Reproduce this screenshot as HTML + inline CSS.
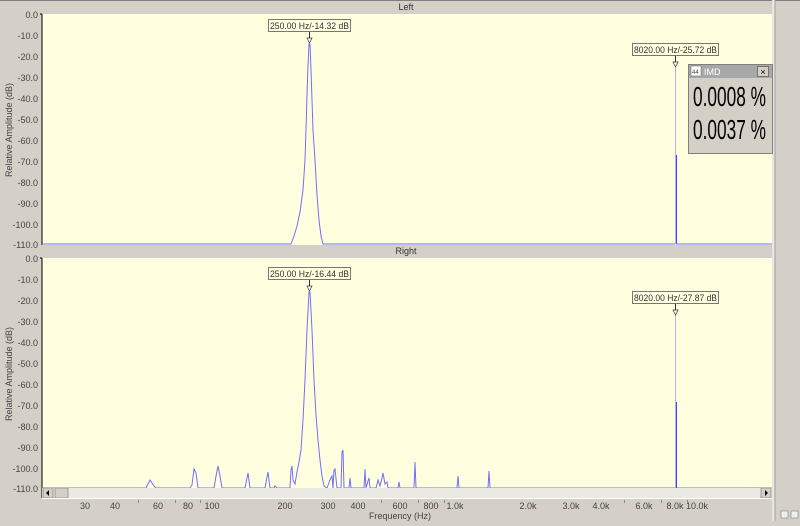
<!DOCTYPE html>
<html><head><meta charset="utf-8"><style>
body{margin:0;width:800px;height:521px;overflow:hidden;background:#d4d0c8;font-family:"Liberation Sans",sans-serif;}
</style></head><body>
<svg width="800" height="521" xmlns="http://www.w3.org/2000/svg" font-family="Liberation Sans, sans-serif">
<rect x="0" y="0" width="800" height="521" fill="#d4d0c8"/>
<rect x="0" y="0" width="800" height="1" fill="#808080"/>
<rect x="772" y="0" width="3" height="521" fill="#e8e6e0"/>
<line x1="775" y1="0" x2="775" y2="521" stroke="#a0a0a0"/>
<text x="406" y="10" font-size="9" fill="#333" text-anchor="middle">Left</text>
<text x="406" y="254" font-size="9" fill="#333" text-anchor="middle">Right</text>
<rect x="42" y="14" width="730" height="231" fill="#ffffe0"/>
<rect x="42" y="258" width="730" height="230" fill="#ffffe0"/>
<line x1="42" y1="14" x2="42" y2="245" stroke="#000"/>
<line x1="42" y1="258" x2="42" y2="498" stroke="#000"/>
<line x1="40" y1="14" x2="42" y2="14" stroke="#000"/>
<line x1="40" y1="258" x2="42" y2="258" stroke="#000"/>
<g font-size="9" fill="#444" text-anchor="end">
<text x="38" y="18">0.0</text><text x="38" y="39">-10.0</text><text x="38" y="60">-20.0</text><text x="38" y="81">-30.0</text><text x="38" y="102">-40.0</text><text x="38" y="123">-50.0</text><text x="38" y="144">-60.0</text><text x="38" y="165">-70.0</text><text x="38" y="186">-80.0</text><text x="38" y="207">-90.0</text><text x="38" y="228">-100.0</text><text x="38" y="248">-110.0</text>
<text x="38" y="262">0.0</text><text x="38" y="283">-10.0</text><text x="38" y="304">-20.0</text><text x="38" y="325">-30.0</text><text x="38" y="346">-40.0</text><text x="38" y="367">-50.0</text><text x="38" y="388">-60.0</text><text x="38" y="409">-70.0</text><text x="38" y="430">-80.0</text><text x="38" y="451">-90.0</text><text x="38" y="472">-100.0</text><text x="38" y="492">-110.0</text>
</g>
<text transform="translate(12,130) rotate(-90)" font-size="9" fill="#444" text-anchor="middle">Relative Amplitude (dB)</text>
<text transform="translate(12,374) rotate(-90)" font-size="9" fill="#444" text-anchor="middle">Relative Amplitude (dB)</text>
<polyline fill="none" stroke="#6f6fff" stroke-width="1" points="42,244 291,244 294,236 297,226 300,212 303,190 305,160 306,130 307,95 308,65 309,44 310,44 311,70 312,100 313,130 315,160 317,195 319,220 321,236 323,244 674,244 675,244"/>
<line x1="675.5" y1="68" x2="675.5" y2="244" stroke="#b0b0ff"/>
<line x1="676.5" y1="155" x2="676.5" y2="244" stroke="#4040ff"/>
<line x1="676" y1="244" x2="772" y2="244" stroke="#6f6fff"/>
<polyline fill="none" stroke="#6f6fff" stroke-width="1" points="42,488 146,488 150,480 154,486 156,488 190,488 192,485 194,469 196,473 198,488 214,488 216,476 218,466 220,476 222,488 245,488 247,478 248,473 250,488 265,488 267,477 268,472 270,488 274,488 275,486 277,488 290,488 291,470 292,466 293,480 295,484 297,472 299,462 301,450 303,420 305,380 307,330 309,292 310,292 312,330 314,380 316,415 318,440 320,460 322,476 324,486 327,488 330,480 332,476 333,488 334,470 335,469 337,488 341,488 342,452 343,450 344,488 349,488 350,478 351,488 364,488 365,469 366,488 368,481 369,478 370,488 376,488 378,480 380,486 382,478 383,473 385,484 387,482 388,488 398,488 399,482 400,488 414,488 415,462 416,488 457,488 458,476 459,488 488,488 489,471 490,488 772,488"/>
<line x1="675.5" y1="315" x2="675.5" y2="488" stroke="#b0b0ff"/>
<line x1="676.5" y1="402" x2="676.5" y2="488" stroke="#4040ff"/>
<g font-size="9" fill="#333">
<rect x="268.5" y="19.5" width="82" height="12" fill="#ffffe0" stroke="#777"/>
<text x="270" y="29" textLength="79" lengthAdjust="spacingAndGlyphs">250.00 Hz/-14.32 dB</text>
<line x1="309.5" y1="32" x2="309.5" y2="38" stroke="#333"/>
<polygon points="307,38 312,38 309.5,43" fill="#fff" stroke="#333" stroke-width="0.7"/>
<rect x="632.5" y="43.5" width="86" height="12" fill="#ffffe0" stroke="#777"/>
<text x="634" y="53" textLength="83" lengthAdjust="spacingAndGlyphs">8020.00 Hz/-25.72 dB</text>
<line x1="675.5" y1="56" x2="675.5" y2="62" stroke="#333"/>
<polygon points="673,62 678,62 675.5,67" fill="#fff" stroke="#333" stroke-width="0.7"/>
<rect x="268.5" y="267.5" width="82" height="12" fill="#ffffe0" stroke="#777"/>
<text x="270" y="277" textLength="79" lengthAdjust="spacingAndGlyphs">250.00 Hz/-16.44 dB</text>
<line x1="309.5" y1="280" x2="309.5" y2="286" stroke="#333"/>
<polygon points="307,286 312,286 309.5,291" fill="#fff" stroke="#333" stroke-width="0.7"/>
<rect x="632.5" y="291.5" width="86" height="12" fill="#ffffe0" stroke="#777"/>
<text x="634" y="301" textLength="83" lengthAdjust="spacingAndGlyphs">8020.00 Hz/-27.87 dB</text>
<line x1="675.5" y1="304" x2="675.5" y2="310" stroke="#333"/>
<polygon points="673,310 678,310 675.5,315" fill="#fff" stroke="#333" stroke-width="0.7"/>
</g>
<rect x="42" y="488" width="730" height="10" fill="#ebe9e4"/>
<rect x="43" y="488" width="10" height="10" fill="#d4d0c8" stroke="#808080" stroke-width="0.7"/>
<polygon points="49,490 46,493 49,496" fill="#000"/>
<rect x="55" y="488" width="13" height="10" fill="#d4d0c8" stroke="#808080" stroke-width="0.7"/>
<rect x="761" y="488" width="10" height="10" fill="#d4d0c8" stroke="#808080" stroke-width="0.7"/>
<polygon points="765,490 768,493 765,496" fill="#000"/>
<line x1="42" y1="498.5" x2="772" y2="498.5" stroke="#fff"/>
<g font-size="9" fill="#444" text-anchor="middle">
<text x="85" y="509">30</text><text x="115" y="509">40</text><text x="158" y="509">60</text><text x="188" y="509">80</text><text x="212" y="509">100</text><text x="285" y="509">200</text><text x="328" y="509">300</text><text x="358" y="509">400</text><text x="400" y="509">600</text><text x="431" y="509">800</text><text x="455" y="509">1.0k</text><text x="528" y="509">2.0k</text><text x="571" y="509">3.0k</text><text x="601" y="509">4.0k</text><text x="644" y="509">6.0k</text><text x="675" y="509">8.0k</text><text x="697" y="509">10.0k</text>
<text x="400" y="519">Frequency (Hz)</text>
</g>
<g stroke="#888">
<line x1="138.5" y1="500" x2="138.5" y2="503"/><line x1="175.5" y1="500" x2="175.5" y2="503"/><line x1="200.5" y1="500" x2="200.5" y2="503"/><line x1="381.5" y1="500" x2="381.5" y2="503"/><line x1="418.5" y1="500" x2="418.5" y2="503"/><line x1="444.5" y1="500" x2="444.5" y2="503"/><line x1="624.5" y1="500" x2="624.5" y2="503"/><line x1="661.5" y1="500" x2="661.5" y2="503"/><line x1="687.5" y1="500" x2="687.5" y2="503"/>
</g>
<rect x="781" y="511" width="7" height="7" fill="#eee" stroke="#808080" stroke-width="0.6"/>
<rect x="791" y="511" width="7" height="7" fill="#eee" stroke="#808080" stroke-width="0.6"/>
<rect x="688.5" y="64.5" width="84" height="89" fill="#d4d0c8" stroke="#808080"/>
<rect x="689" y="65" width="83" height="13" fill="#a8a8a8"/>
<rect x="691" y="66" width="10" height="10" fill="#fff" stroke="#777" stroke-width="0.6"/>
<text x="692" y="74" font-size="6" fill="#444">44</text>
<text x="704" y="75" font-size="9" fill="#fff">IMD</text>
<rect x="757.5" y="66.5" width="11" height="10" fill="#d4d0c8" stroke="#555" stroke-width="0.7"/>
<text x="763" y="75" font-size="9" fill="#000" text-anchor="middle">×</text>
<text x="693" y="106" font-size="28" fill="#000" textLength="73" lengthAdjust="spacingAndGlyphs">0.0008 %</text>
<text x="693" y="139" font-size="28" fill="#000" textLength="73" lengthAdjust="spacingAndGlyphs">0.0037 %</text>
</svg>
</body></html>
